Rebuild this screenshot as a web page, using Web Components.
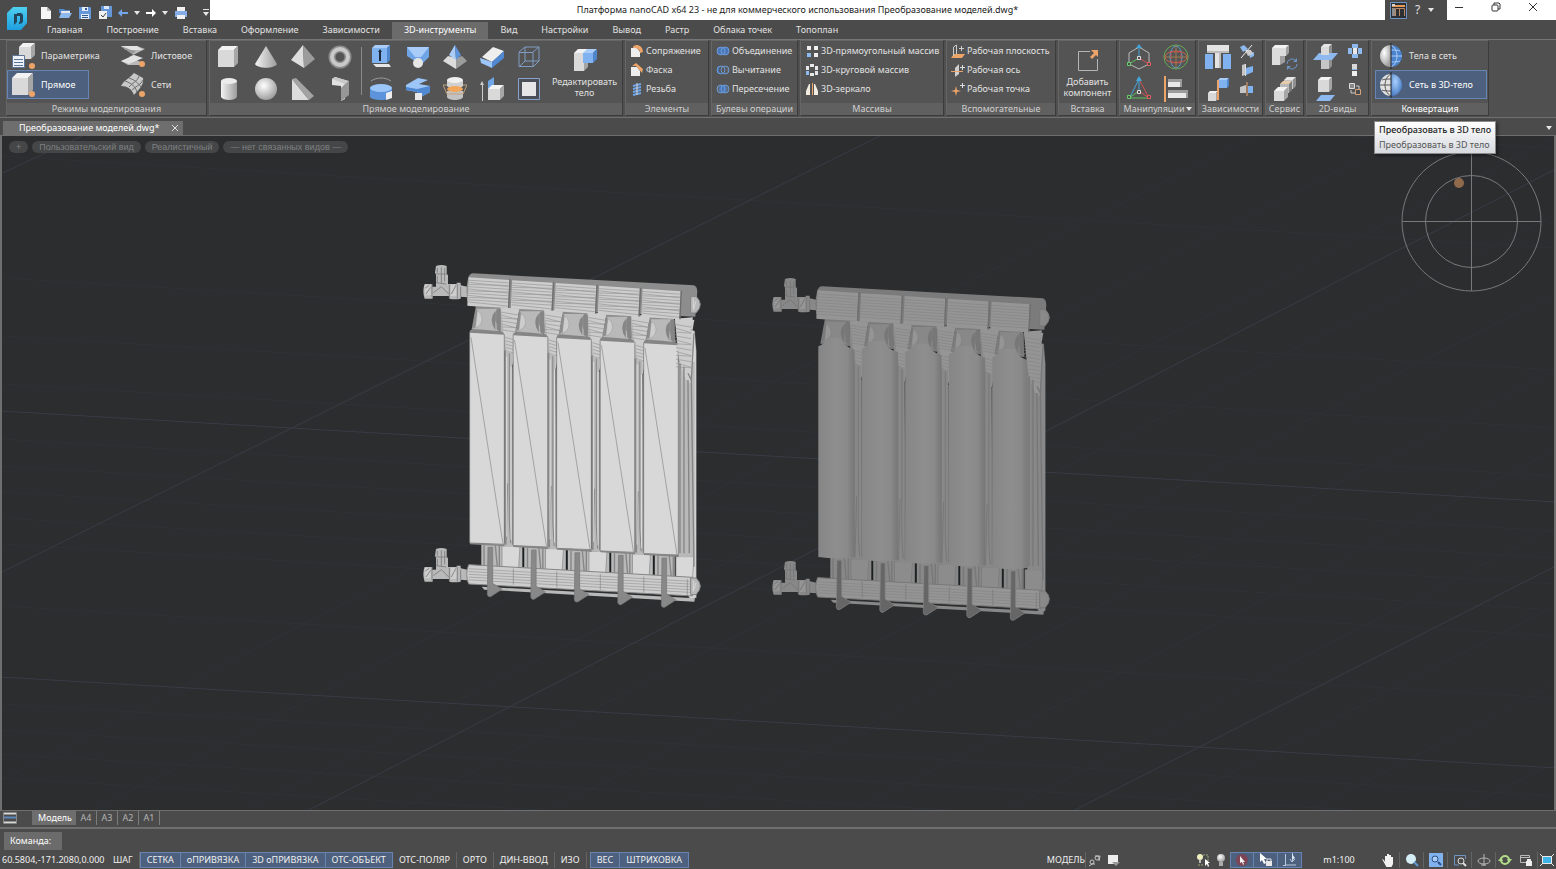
<!DOCTYPE html>
<html lang="ru">
<head>
<meta charset="utf-8">
<title>Платформа nanoCAD x64 23</title>
<style>
	html, body {
		margin: 0;
		height: 100%;
		background: #4b4b4b;
	}
	body {
		font-family: "Noto Sans", "Open Sans", sans-serif;
		font-size: 9px;
		line-height: 12px;
		color: #e2e2e2;
		--on: #4d607e;
		--on-line: #6685b2;
	}
</style>
</head>
<body>
<cad-app></cad-app>

<script>
///////////////////    icons    //////////////////////////

const GREY = ['#d9d9d9', '#f2f2f2', '#a6a6a6'];
const DULL = ['#c6c6c6', '#e6e6e6', '#8f8f8f'];
const BLUE = ['#7fb2ee', '#a9cdf8', '#4f86cc'];

// box seen from the front left: front, top and right faces
function box(x, y, w, h, d, tone = GREY) {
	return `<path fill="${tone[0]}" d="M${x} ${y + d}h${w}v${h}h${-w}z"/>
		<path fill="${tone[1]}" d="M${x} ${y + d}l${d} ${-d}h${w}l${-d} ${d}z"/>
		<path fill="${tone[2]}" d="M${x + w} ${y + d}l${d} ${-d}v${h}l${-d} ${d}z"/>`;
}

const dot = (x, y) => `<circle cx="${x}" cy="${y}" r="3" fill="#eda468"/>`;
const defs = `<defs>
	<linearGradient id="g"><stop stop-color="#f4f4f4"/><stop offset="1" stop-color="#9b9b9b"/></linearGradient>
	<radialGradient id="r" cx=".4" cy=".35" r=".65"><stop stop-color="#fff"/><stop offset="1" stop-color="#a0a0a0"/></radialGradient>
	<radialGradient id="b" cx=".4" cy=".35" r=".7"><stop stop-color="#a9d0ff"/><stop offset="1" stop-color="#4478c0"/></radialGradient>
	<linearGradient id="logo" x2="0" y2="1"><stop stop-color="#4fd0f0"/><stop offset="1" stop-color="#1d9fe0"/></linearGradient>
</defs>`;

const rings = (a, b, c) => `<circle cx="5" cy="7" r="4" fill="${a}"/><circle cx="9" cy="7" r="4" fill="${b}"/>
	<path fill="${c}" d="M7 3a4 4 0 0 1 0 8a4 4 0 0 1 0-8z"/>
	<g fill="none" stroke="#6c9bd8"><circle cx="5" cy="7" r="4"/><circle cx="9" cy="7" r="4"/></g>`;

// name: [width, height, markup]
const icons = {
	logo: [20, 24, `<path fill="url(#logo)" d="M6 0h14v16l-6 7H0V6z"/><path fill="#24465c" d="M7 7h3v8l-3 3zM10 6h3c2 0 3 1 3 3v5c0 2-2 3-4 3v-2c1 0 1-1 1-2V9h-3z"/>`],
	file: [12, 14, '<path fill="#f5f5f5" d="M1 1h6l4 4v8H1z"/><path fill="#b8b8b8" d="M7 1v4h4z"/>'],
	open: [14, 14, '<path fill="#4f86cc" d="M1 3h5l1 1h5v3H1z"/><path fill="#e8e8e8" d="M3 5h9v4H3z"/><path fill="#8db9ef" d="M3 7h11l-3 5H1z"/>'],
	save: [14, 14, '<path fill="#6597d8" d="M1 1h11l1 1v11H1z"/><path fill="#e3ecf8" d="M4 1h6v4H4zM3 8h8v5H3z"/><path fill="#35598c" d="M7 2h2v2H7zM4 9h6v1H4zM4 11h6v1H4z"/>'],
	saveall: [14, 14, '<path fill="#6597d8" d="M3 0h11v11H3z"/><path fill="#dce8f8" d="M6 0h5v3H6z"/><path fill="#f1f1f1" d="M1 5h8v8H1z"/><path fill="none" stroke="#444" d="M3 9l2 2 3-4"/>'],
	undo: [10, 10, '<path fill="#73a6e8" d="M0 5l4-4v3h6v2H4v3z"/>'],
	redo: [10, 10, '<path fill="#fff" d="M10 5L6 1v3H0v2h6v3z"/>'],
	print: [14, 14, '<path fill="#f1f1f1" d="M3 1h8v5H3z"/><path fill="#85aee6" d="M1 5h12v6H1z"/><path fill="#f1f1f1" d="M3 9h8v4H3z"/>'],
	caret: [6, 4, '<path fill="#e6e6e6" d="M0 0h6L3 4z"/>'],
	carets: [6, 7, '<path fill="#e6e6e6" d="M0 0h6v1H0zM0 3h6L3 7z"/>'],
	help: [17, 17, '<path fill="#2d3033" stroke="#6f93c2" d="M.5.5h16v16H.5z"/><path fill="#e79a5a" d="M2 3h13v2H2z"/><path fill="#8d8d8d" d="M2 6h3v8H2z"/><path fill="none" stroke="#b98763" d="M5.500 14V6.500h9V14M9.500 6v8"/><path fill="#d5d5d5" d="M2 2h3v2H2z"/>'],
	min: [10, 10, '<path stroke="#333" d="M1 5.500h8"/>'],
	restore: [10, 10, '<g fill="none" stroke="#333"><rect x="1" y="3" width="6" height="6" rx="1"/><path d="M3 3V1h5l1 1v5H7"/></g>'],
	close: [10, 10, '<path stroke="#333" d="M1 1l8 8M9 1L1 9"/>'],
	x: [8, 8, '<path stroke="#ddd" d="M1 1l6 6M7 1L1 7"/>'],

	param: [24, 26, box(8, 0, 12, 12, 4) + '<path fill="#eef2f8" stroke="#5c7698" d="M1.500 12.500h12v12h-12z"/><path stroke="#5c7698" d="M3 16.500h9M3 19.500h9M3 22.500h9"/>' + dot(21, 23)],
	direct: [24, 26, box(1, 1, 16, 17, 5) + dot(21, 22)],
	sheet: [24, 26, '<path fill="#b9b9b9" d="M0 3h16l8 3-16 8 12 5v3H7l-7-4 14-5z"/><path fill="#e2e2e2" d="M0 3h16l6 4H5zM0 18l13-6 9 3-14 6z"/><path fill="#969696" d="M0 3l5 4 6 4 4-3-5-1z"/>' + dot(21, 21)],
	mesh: [24, 26, '<path fill="#c8c8c8" d="M0 14C4 7 8 7 13 1l9 5c1 7-3 10-9 17-2-6-7-9-13-9z"/><path fill="none" stroke="#6d6d6d" d="M4 9c6 2 10 5 12 11M8 6c6 2 9 5 12 9M8 15c3-4 8-5 10-11M11 18c4-4 9-5 11-10"/>' + dot(21, 22)],

	cube: [24, 24, box(1, 1, 16, 17, 4)],
	cone: [24, 24, '<path fill="url(#g)" d="M12 1l11 18c-3 5-19 5-22 0z"/>'],
	pyramid: [24, 24, '<path fill="#dedede" d="M12 0L0 15l13 8z"/><path fill="#9c9c9c" d="M12 0l12 14-11 9z"/>'],
	torus: [24, 24, '<circle cx="12" cy="12" r="8" fill="none" stroke="#8b8b8b" stroke-width="7"/><circle cx="12" cy="12" r="8" fill="none" stroke="#c9c9c9" stroke-width="4"/>'],
	cylinder: [24, 24, '<path fill="url(#g)" d="M4 4h16v16c-2 4-14 4-16 0z"/><ellipse cx="12" cy="4" rx="8" ry="3" fill="#ececec"/>'],
	sphere: [24, 24, '<circle cx="12" cy="12" r="11" fill="url(#r)"/>'],
	wedge: [24, 24, '<path fill="#dcdcdc" d="M1 2v21h17z"/><path fill="#a3a3a3" d="M1 2l4-1 18 18-5 4z"/>'],
	polysolid: [24, 24, '<path fill="#e2e2e2" d="M4 2l3-2 13 4-3 3v15l-4 2V9L4 8z"/><path fill="#979797" d="M17 7l4-3v14l-8 6V11z"/><path fill="#c9c9c9" d="M4 2l3-2 14 4-4 3z"/>'],

	extrude: [24, 24, box(3, 0, 15, 15, 3, BLUE) + '<path fill="#e6e6e6" d="M4 19h16l2 3H7z"/><path fill="#1d2b3c" d="M9 7l2-3 2 3h-1v9h-2V7z"/>'],
	loft: [24, 24, '<path fill="#6fa5e6" d="M1 2h22v10l-8 8-14-9z"/><path fill="#a9cdf8" d="M1 2h22l-8 10H9z"/><circle cx="12" cy="18" r="5" fill="#e6e6e6"/>'],
	tip: [24, 24, '<path fill="#dcdcdc" d="M5 11L0 16l13 8V13z"/><path fill="#9c9c9c" d="M19 11l5 5-11 8V13z"/><path fill="#a9cdf8" d="M12 0L6 10l7 5z"/><path fill="#5c93da" d="M12 0l6 10-5 5z"/>'],
	eraser: [24, 24, '<path fill="#eee" d="M2 12L13 2l11 4-12 11z"/><path fill="#9cc6f8" d="M0 13l12 4v6L1 18z"/><path fill="#5088d2" d="M12 17L24 6v7L12 23z"/>'],
	wire: [24, 24, '<g fill="none" stroke="#7f9cc2"><path d="M2 7.500h14v14H2zM8 2h14v14H8zM2 7l6-5M16 7l6-5M2 22l6-6M16 22l6-6"/></g>'],
	revolve: [24, 24, '<path fill="#5c93da" d="M1 10h22v10c-2 4-20 4-22 0z"/><ellipse cx="12" cy="11" rx="11" ry="4" fill="#9cc6f8"/><path fill="#eee" d="M17 16l6-2v7l-6 2z"/><path fill="none" stroke="#9a9a9a" d="M2 4c6-4 14-4 20 0"/>'],
	sweep: [24, 24, '<path fill="#9cc6f8" d="M0 8L12 1l10 2-9 4 11 2v6l-9 5-4-5-11-2z"/><path fill="#5088d2" d="M0 10l11 2 13-3v6l-9 5-4-5-11-2z"/><path fill="#e9e9e9" d="M9 16h7v7H9z"/>'],
	press: [24, 24, '<path fill="#c2c2c2" d="M4 14h16v6c-1 4-15 4-16 0z"/><path fill="none" stroke="#bfa37f" d="M0 8h24l-4 9H4z"/><path fill="#d0d0d0" d="M4 3h16v6c-2 3-14 3-16 0z"/><ellipse cx="12" cy="12" rx="8" ry="3" fill="#f2a75c"/><ellipse cx="12" cy="3" rx="8" ry="3" fill="#efefef"/>'],
	pull: [24, 24, '<path fill="#6fa5e6" d="M8 4l6-4v10l-6 5z"/>' + box(8, 8, 12, 11, 4) + '<path fill="#ccc" d="M2 4l2 4H3v16H2V8H0z"/>'],
	region: [24, 24, '<path fill="#4a4f58" stroke="#88a3cc" d="M1.500 1.500h21v21h-21z"/><path fill="#e6e6e6" d="M5 5h14v14H5z"/>'],
	edit: [26, 26, box(2, 2, 10, 18, 4) + box(11, 2, 10, 10, 4, BLUE)],

	fillet: [14, 14, '<path fill="#ededed" d="M1 4h6l3 4v5H1z"/><path fill="#eda468" d="M3 3c2-4 10-2 10 5l-3 1c0-4-3-5-7-5z"/>'],
	chamfer: [14, 14, '<path fill="#ededed" d="M1 4h6l3 4v5H1z"/><path fill="#eda468" d="M2 3l4-3 7 6-1 4-6-7z"/>'],
	thread: [14, 14, '<path stroke="#6fa5e6" stroke-width="2" d="M3 4l8-2M3 7l8-2M3 10l8-2M3 13l8-2"/><path stroke="#d5d5d5" d="M7 1v12"/>'],
	union: [14, 14, rings('#4b76b8', '#4b76b8', '#4b76b8')],
	subtract: [14, 14, rings('#4b76b8', '#666', '#555')],
	intersect: [14, 14, rings('#666', '#666', '#4b76b8')],
	array: [14, 14, '<path fill="#f0f0f0" d="M2 2h4v4H2zM9 2h4v4H9zM9 9h4v4H9z"/><path fill="#8db9ef" d="M2 9h4v4H2z"/>'],
	polar: [14, 14, '<path fill="#e8e8e8" d="M5 1h4v3H5zM5 10h4v3H5zM1 3h3v4H1zM10 3h3v4h-3zM10 8h3v4h-3z"/><path fill="#8db9ef" d="M1 8h3v4H1z"/>'],
	mirror: [14, 14, '<path fill="#f2ece0" d="M1 13V9l3-7h1v11zM13 13V9l-3-7H9v11z"/><path fill="#eda468" d="M7 1h1v12H7z"/>'],
	plane: [14, 14, '<path fill="#eda468" d="M3 10h11l-3 4H0z"/><path fill="none" stroke="#ccc" d="M2.500 12V3l3-2v9M8 4.500h5M10.500 2v5"/>'],
	axis: [14, 14, '<path fill="#cfcfcf" d="M4 5l4-4v10l-4 3z"/><path stroke="#eda468" d="M0 8.500h12"/><path stroke="#ddd" d="M9 4.500h5M11.500 2v5"/>'],
	point: [14, 14, '<path fill="#eda468" d="M5 4l1 4 4 1-4 1-1 4-1-4-4-1 4-1z"/><path stroke="#ddd" d="M9 3.500h5M11.500 1v5"/>'],
	insert: [26, 26, '<path fill="none" stroke="#b5b5b5" d="M15 4.500H3.500v19h19V12"/><path fill="#eda468" d="M16 3h7v7l-2-2-4 4-2-2 4-4z"/>'],

	ucs: [26, 26, '<path fill="none" stroke="#bbb" d="M13 3l10 6v11l-10 5-10-5V9z"/><path stroke="#45a5d8" d="M13 2v12"/><path stroke="#5cbf5c" d="M13 14L3 20"/><path stroke="#d35353" d="M13 14l10 6"/><path fill="#4b4b4b" stroke="#6ad16a" d="M1.500 18.500h3v3h-3z"/><path fill="#4b4b4b" stroke="#e26060" d="M21.500 18.500h3v3h-3z"/><path fill="#4b4b4b" stroke="#ddd" d="M11.500 12.500h3v3h-3z"/><path fill="#45a5d8" d="M10 4l3-4 3 4z"/>'],
	orbit: [26, 26, '<g fill="none"><circle cx="13" cy="13" r="12" stroke="#64ad58"/><ellipse cx="13" cy="13" rx="6" ry="11" stroke="#54a0c8"/><ellipse cx="13" cy="13" rx="11" ry="6" stroke="#c96050"/><path stroke="#d35353" stroke-dasharray="2 1" d="M8 8h10v10H8z"/><path stroke="#a07a4c" d="M13 1v24M1 13h24"/></g>'],
	gizmo: [26, 26, '<g fill="none"><path stroke="#45a5d8" d="M13 3L4 21M13 3v12"/><path stroke="#5cbf5c" d="M3 22h19M3 22l10-7"/><path stroke="#d35353" d="M13 3l10 19-10-7"/></g><path fill="#45a5d8" d="M10 5l3-5 3 5z"/><path fill="#4b4b4b" stroke="#6ad16a" d="M1.500 19.500h3v3h-3z"/><path fill="#4b4b4b" stroke="#e26060" d="M21.500 19.500h3v3h-3z"/><path fill="#4b4b4b" stroke="#ddd" d="M11.500 14.500h3v3h-3z"/>'],
	align: [26, 26, '<path stroke="#eda468" stroke-width="2" d="M2 0v26"/><path fill="#9b9b9b" d="M5 3h14v8H5zM5 14h20v8H5z"/><path fill="#e8e8e8" d="M5 6h12v5H5zM5 17h18v5H5z"/>'],
	mateT: [28, 26, '<path fill="#e3e3e3" d="M3 1h22v7h-8v16h-6V8H3z"/><path fill="#bcbcbc" d="M3 7h22v2h-8v15h-2V9H3z"/><path fill="#7fb2ee" d="M1 10h8v15H1zM19 10h8v15h-8z"/>'],
	mateZ: [26, 26, box(3, 15, 8, 8, 2) + box(13, 2, 9, 8, 2, BLUE) + '<path stroke="#eda468" stroke-width="2" d="M13 4v20"/>'],
	mate1: [14, 14, '<path fill="#8db9ef" d="M0 3l4-2 4 4-5 3zM9 9l5-1v4l-4 2z"/><path fill="#ccc" d="M5 6h6l2 4-5 2z"/><path stroke="#eee" d="M1 14L12 1"/>'],
	mate2: [14, 14, '<path fill="#c6c6c6" d="M2 2l3-1v11l-3 1z"/><path fill="#7fb2ee" d="M6 5l7-2v6l-7 3z"/><path stroke="#ddd" d="M5.500 1v12"/>'],
	mate3: [14, 14, '<path fill="#c6c6c6" d="M0 5l6-2v8H0z"/><path fill="#7fb2ee" d="M8 4h5v7H8z"/><path stroke="#eda468" d="M7 0v14"/>'],
	service: [28, 26, '<path fill="#dcdcdc" d="M1 4h14v8H9v9H1z"/><path fill="#f2f2f2" d="M1 4l3-3h14l-3 3z"/><path fill="#a0a0a0" d="M15 4l3-3v8l-3 3zM9 12h5v6l-5 3z"/><path fill="none" stroke="#6f93c2" d="M16 20a5 5 0 0 1 9-3M26 20a5 5 0 0 1-9 3"/><path fill="#6f93c2" d="M26 14v4h-4zM16 26v-4h4z"/>'],
	service2: [26, 26, box(12, 1, 9, 9, 3, DULL) + box(8, 5, 9, 9, 3, ['#b9b9b9', '#e8cba8', '#7d7d7d']) + box(2, 11, 10, 10, 4)],
	section: [26, 26, box(8, 0, 8, 22, 3, DULL) + '<path fill="#8db9ef" d="M6 9h19l-6 7H0z"/><path fill="#dadada" d="M8 3h8v8H8z"/>'],
	flat: [26, 26, box(5, 1, 11, 12, 3) + '<path fill="#8db9ef" d="M8 19h14l-5 6H3z"/>'],
	v1: [14, 14, '<path fill="#8db9ef" d="M0 4h4v6H0zM10 4h4v6h-4zM4 0h6v4H4zM4 10h6v4H4z"/><path fill="#e8e8e8" d="M5 4h4v6H5z"/>'],
	v2: [14, 14, '<path fill="#d8d8d8" d="M4 1h5v5H4z"/><path fill="#f0f0f0" d="M4 8h5v5H4z"/><path fill="#8db9ef" d="M4 6h5v1H4z"/>'],
	v3: [14, 14, '<path fill="#8a8a8a" stroke="#ddd" d="M1.500 1.500h5v5h-5z"/><path fill="#4b4b4b" stroke="#d8a27a" d="M7.500 7.500h5v5h-5z"/><path fill="none" stroke="#ccc" d="M8 4h3v3M3 8v3h4"/>'],
	tomesh: [24, 26, '<path fill="url(#r)" d="M12 2a11 11 0 0 0 0 22z"/><path fill="#4a82cc" d="M12 2a11 11 0 0 1 0 22z"/><path fill="none" stroke="#a9cdf8" d="M12 7c4 0 7 0 9 1M12 13h11M12 19c4 0 7 0 9-1M12 2c8 4 8 18 0 22"/><path stroke="#222" d="M12 0v26"/>'],
	tosolid: [24, 26, '<path fill="#e2e2e2" d="M12 2a11 11 0 0 0 0 22z"/><path fill="none" stroke="#555" d="M12 7c-4 0-7 0-9 1M12 13H1M12 19c-4 0-7 0-9-1M12 2c-8 4-8 18 0 22"/><path fill="url(#b)" d="M12 2a11 11 0 0 1 0 22z"/><path stroke="#222" d="M12 0v26"/>'],

	sheets: [14, 12, '<path stroke="#d8d8d8" stroke-width="2" d="M1 1.500h12M1 10.500h12"/><path stroke="#5d86bd" stroke-width="2" d="M1 5.500h12"/><path fill="none" stroke="#888" d="M.5.5h13v11H.5z"/>'],
	link: [12, 14, '<g fill="none" stroke="#c5c5c5"><circle cx="3" cy="9" r="2"/><path d="M0 13l3-2h3M6 3h5l-1 5"/><circle cx="8" cy="5" r="2"/></g>'],
	note: [14, 14, '<path fill="#ededed" d="M2 2h10v9H2z"/><path fill="#9a9a9a" d="M6 9h8l-4 4z"/>'],
	pick: [14, 14, '<circle cx="4" cy="4" r="3" fill="#eef0c0"/><path fill="#bbb" d="M3 7h2v3H3z"/><path fill="none" stroke="#9aa87c" stroke-dasharray="2 1" d="M7 2h5v6M2 12h5"/><path fill="#fff" d="M9 6v7l2-2 1 3 1-1-1-3h2z"/>'],
	bulb: [10, 14, '<circle cx="5" cy="5" r="4" fill="url(#r)"/><path fill="#aaa" d="M3 9h4v4H3z"/>'],
	sel: [14, 14, '<circle cx="7" cy="7" r="6" fill="#7d4456"/><path fill="#f0f0f0" d="M5 3v7l2-1 1 3 1-1-1-2h2z"/>'],
	lock: [14, 14, '<path fill="#fff" d="M1 0v9l2-2 2 4 2-1-2-4h3z"/><path fill="#e8e8e8" d="M7 8h6v5H7z"/><path fill="none" stroke="#e8e8e8" d="M8 8V6h4v2"/>'],
	coords: [14, 14, '<path fill="none" stroke="#b9c8de" d="M2.500 1v11H13M9.500 0v9M7 6l2 3 3-3M0 12.500h3"/><path fill="#dfe8f4" d="M9 1l3 4-3 2z"/>'],
	hand: [14, 14, '<path fill="#f2f2f2" d="M1 6l2 1 1 2V3h2v4-6h2v6-5h2v5-3h2v7l-2 4H6z"/>'],
	lens: [14, 14, '<circle cx="6" cy="6" r="5" fill="#d5eef6"/><path stroke="#5f97d6" stroke-width="2" d="M9 9l4 4"/>'],
	lenswin: [14, 14, '<path fill="#7fb2ee" d="M0 0h14v14H0z"/><circle cx="6" cy="6" r="3" fill="#a9cdf8" stroke="#2d4f80"/><path stroke="#2d4f80" stroke-width="2" d="M9 9l3 3"/>'],
	lensbox: [14, 14, '<path fill="none" stroke="#6f93c2" d="M6 12H1.500V2.500h11V6"/><circle cx="8" cy="8" r="3" fill="none" stroke="#ddd"/><path stroke="#ddd" stroke-width="2" d="M10 10l3 3"/>'],
	spin: [14, 14, '<g fill="none" stroke="#b5b5b5"><ellipse cx="7" cy="8" rx="6" ry="3"/><path d="M7 1v12M4 12h5"/></g>'],
	regen: [14, 14, '<circle cx="7" cy="7" r="4" fill="none" stroke="#b3dc8a" stroke-width="2"/><path fill="#b3dc8a" d="M0 8h5L3 4zM14 6H9l2 4z"/>'],
	winlock: [14, 14, '<path fill="none" stroke="#bbb" d="M9 9.500H1.500v-7h9V5M1 4.500h9"/><path fill="#eee" d="M7 8h6v5H7zM8 6h4v2H8z"/>'],
	full: [14, 14, '<path fill="#3fb4e8" d="M3 4h8v6H3z"/><path fill="none" stroke="#e8e8e8" d="M2.500 3.500h9v7h-9zM0 1l3 3M14 1l-3 3M0 13l3-3M14 13l-3-3"/>'],
};

class CadIcon extends HTMLElement {
	constructor() {
		super();
		this.attachShadow({ mode: 'open' });
	}

	render() {
		const [w, h, art] = icons[this.getAttribute('name')];
		this.shadowRoot.innerHTML = `<style>:host { display: block; flex: none } svg { display: block }</style>
			<svg width="${w}" height="${h}" viewBox="0 0 ${w} ${h}" aria-hidden="true">${defs}${art}</svg>`;
	}

	static get observedAttributes() {
		return ['name'];
	}

	attributeChangedCallback() {
		this.render();
	}
}

customElements.define('cad-icon', CadIcon);

// every other element only clones its template
function define(name, html, setup) {
	const template = document.createElement('template');
	template.innerHTML = html;
	customElements.define(name, class extends HTMLElement {
		connectedCallback() {
			if (this.shadowRoot) return;
			this.attachShadow({ mode: 'open' });
			this.shadowRoot.appendChild(template.content.cloneNode(true));
			if (setup) setup(this, this.shadowRoot);
		}
	});
}

const reset = `button {
	display: flex; align-items: center; margin: 0; padding: 0; border: 0;
	background: none; color: inherit; font: inherit; text-align: left; white-space: nowrap;
}`;

///////////////////    ribbon    //////////////////////////

define('ribbon-button', `
	<style>
		:host { display: block }
		${reset}
		button { width: 100%; justify-content: center; height: 32px }
		:host([kind=wide]) button {
			justify-content: flex-start; gap: 6px; height: 29px; padding: 0 0 0 3px; border: 1px solid transparent; box-sizing: border-box;
		}
		:host([on]) button { background: var(--on); border-color: var(--on-line) !important; color: #fff }
		:host([kind=row]) button { justify-content: flex-start; gap: 2px; height: 19px }
		:host([kind=big]) button { flex-direction: column; height: auto; padding-top: 6px; gap: 3px; text-align: center; line-height: 11px }
	</style>
	<button type="button"><cad-icon></cad-icon><span><slot></slot></span></button>
`, (host, root) => {
	root.querySelector('cad-icon').setAttribute('name', host.getAttribute('icon'));
	const button = root.querySelector('button');
	if (host.title) {
		button.setAttribute('aria-label', host.title);
		root.querySelector('span').remove();
	}
	if (host.hasAttribute('on')) button.setAttribute('aria-pressed', 'true');
});

define('ribbon-group', `
	<style>
		:host {
			display: flex; flex-direction: column; flex: none; position: relative; box-sizing: border-box; height: 76px;
			border: 1px solid #666; border-right-color: #3c3c3c; border-bottom-color: #3c3c3c; background: #545454;
		}
		.body { display: flex; flex: 1; min-height: 0 }
		.caption { display: flex; align-items: center; justify-content: center; gap: 1px; height: 12px; background: #606060; color: #cfcfcf }
		:host([lit]) .caption { color: #fff }
	</style>
	<div class="body"><slot></slot></div>
	<div class="caption"><span></span></div>
	<slot name="tip"></slot>
`, (host, root) => {
	root.querySelector('span').textContent = host.getAttribute('caption');
	if (host.hasAttribute('more')) root.querySelector('.caption').insertAdjacentHTML('beforeend', '<cad-icon name="caret"></cad-icon>');
});

define('tool-tip', `
	<style>
		:host {
			display: block; position: absolute; z-index: 2; top: 80px; left: 2px; padding: 0 4px 1px; line-height: 15px; white-space: nowrap;
			border: 1px solid #8a8a8a; box-sizing: border-box; background: linear-gradient(#fff, #d6d9de); color: #555;
			box-shadow: 2px 2px 3px rgba(0, 0, 0, .4);
		}
		strong { display: block; font-weight: 500; color: #222 }
	</style>
	<strong><slot name="head"></slot></strong><slot></slot>
`);

define('cad-ribbon', `
	<style>
		:host { display: flex; gap: 2px; padding: 0 6px 1px; border-top: 1px solid #767676; border-bottom: 1px solid #707070; background: #505050 }
		.col { flex: none }
		.rows { padding: 0 1px 0 4px }
		.grid { display: grid; grid-template-columns: repeat(var(--n), 37px); align-content: start }
		hr { margin: 6px 0 8px 3px; border: 0; border-left: 1px solid #8a8a8a }
		.modes { width: 199px; display: grid; grid-template-columns: 82px 82px; gap: 28px; align-items: start }
		.big { width: 75px }
		.small { display: grid; grid-auto-rows: 19px; width: 20px; padding-left: 4px }
		.convert { flex: 1; padding: 0 1px 0 3px }
	</style>
	<ribbon-group caption="Режимы моделирования">
		<div class="modes">
			<div class="col">
				<ribbon-button kind="wide" icon="param">Параметрика</ribbon-button>
				<ribbon-button kind="wide" icon="direct" on>Прямое</ribbon-button>
			</div>
			<div class="col">
				<ribbon-button kind="wide" icon="sheet">Листовое</ribbon-button>
				<ribbon-button kind="wide" icon="mesh">Сети</ribbon-button>
			</div>
		</div>
	</ribbon-group>
	<ribbon-group caption="Прямое моделирование">
		<div class="col grid" style="--n: 4">
			<ribbon-button icon="cube" title="Параллелепипед"></ribbon-button>
			<ribbon-button icon="cone" title="Конус"></ribbon-button>
			<ribbon-button icon="pyramid" title="Пирамида"></ribbon-button>
			<ribbon-button icon="torus" title="Тор"></ribbon-button>
			<ribbon-button icon="cylinder" title="Цилиндр"></ribbon-button>
			<ribbon-button icon="sphere" title="Шар"></ribbon-button>
			<ribbon-button icon="wedge" title="Клин"></ribbon-button>
			<ribbon-button icon="polysolid" title="Политело"></ribbon-button>
		</div>
		<hr>
		<div class="col grid" style="--n: 5">
			<ribbon-button icon="extrude" title="Выдавливание"></ribbon-button>
			<ribbon-button icon="loft" title="По сечениям"></ribbon-button>
			<ribbon-button icon="tip" title="Отсечение"></ribbon-button>
			<ribbon-button icon="eraser" title="Придание толщины"></ribbon-button>
			<ribbon-button icon="wire" title="Каркас"></ribbon-button>
			<ribbon-button icon="revolve" title="Вращение"></ribbon-button>
			<ribbon-button icon="sweep" title="По траектории"></ribbon-button>
			<ribbon-button icon="press" title="Разрез"></ribbon-button>
			<ribbon-button icon="pull" title="Вытягивание"></ribbon-button>
			<ribbon-button icon="region" title="Область"></ribbon-button>
		</div>
		<ribbon-button class="big" kind="big" icon="edit">Редактировать<br>тело</ribbon-button>
	</ribbon-group>
	<ribbon-group caption="Элементы" style="min-width: 84px">
		<div class="rows">
			<ribbon-button kind="row" icon="fillet">Сопряжение</ribbon-button>
			<ribbon-button kind="row" icon="chamfer">Фаска</ribbon-button>
			<ribbon-button kind="row" icon="thread">Резьба</ribbon-button>
		</div>
	</ribbon-group>
	<ribbon-group caption="Булевы операции" style="min-width: 87px">
		<div class="rows">
			<ribbon-button kind="row" icon="union">Объединение</ribbon-button>
			<ribbon-button kind="row" icon="subtract">Вычитание</ribbon-button>
			<ribbon-button kind="row" icon="intersect">Пересечение</ribbon-button>
		</div>
	</ribbon-group>
	<ribbon-group caption="Массивы" style="min-width: 144px">
		<div class="rows">
			<ribbon-button kind="row" icon="array">3D-прямоугольный массив</ribbon-button>
			<ribbon-button kind="row" icon="polar">3D-круговой массив</ribbon-button>
			<ribbon-button kind="row" icon="mirror">3D-зеркало</ribbon-button>
		</div>
	</ribbon-group>
	<ribbon-group caption="Вспомогательные" style="min-width: 110px">
		<div class="rows">
			<ribbon-button kind="row" icon="plane">Рабочая плоскость</ribbon-button>
			<ribbon-button kind="row" icon="axis">Рабочая ось</ribbon-button>
			<ribbon-button kind="row" icon="point">Рабочая точка</ribbon-button>
		</div>
	</ribbon-group>
	<ribbon-group caption="Вставка" style="min-width: 59px">
		<ribbon-button kind="big" icon="insert" style="flex: 1">Добавить<br>компонент</ribbon-button>
	</ribbon-group>
	<ribbon-group caption="Манипуляции" more style="min-width: 77px">
		<div class="col grid" style="--n: 2">
			<ribbon-button icon="ucs" title="ПСК"></ribbon-button>
			<ribbon-button icon="orbit" title="Поворот"></ribbon-button>
			<ribbon-button icon="gizmo" title="Перемещение"></ribbon-button>
			<ribbon-button icon="align" title="Выравнивание"></ribbon-button>
		</div>
	</ribbon-group>
	<ribbon-group caption="Зависимости" style="min-width: 65px">
		<div class="col grid" style="--n: 1">
			<ribbon-button icon="mateT" title="Вставка"></ribbon-button>
			<ribbon-button icon="mateZ" title="Совмещение"></ribbon-button>
		</div>
		<div class="small">
			<ribbon-button kind="row" icon="mate1" title="Угол"></ribbon-button>
			<ribbon-button kind="row" icon="mate2" title="Касание"></ribbon-button>
			<ribbon-button kind="row" icon="mate3" title="Симметрия"></ribbon-button>
		</div>
	</ribbon-group>
	<ribbon-group caption="Сервис" style="min-width: 39px">
		<div class="col grid" style="--n: 1">
			<ribbon-button icon="service" title="Обновить"></ribbon-button>
			<ribbon-button icon="service2" title="Проверка пересечений"></ribbon-button>
		</div>
	</ribbon-group>
	<ribbon-group caption="2D-виды" style="min-width: 61px">
		<div class="col grid" style="--n: 1">
			<ribbon-button icon="section" title="Сечение"></ribbon-button>
			<ribbon-button icon="flat" title="Проекция"></ribbon-button>
		</div>
		<div class="small">
			<ribbon-button kind="row" icon="v1" title="Виды"></ribbon-button>
			<ribbon-button kind="row" icon="v2" title="Разрез"></ribbon-button>
			<ribbon-button kind="row" icon="v3" title="Выносной вид"></ribbon-button>
		</div>
	</ribbon-group>
	<ribbon-group caption="Конвертация" lit style="min-width: 118px">
		<div class="convert">
			<ribbon-button kind="wide" icon="tomesh">Тела в сеть</ribbon-button>
			<ribbon-button kind="wide" icon="tosolid" on>Сеть в 3D-тело</ribbon-button>
		</div>
		<tool-tip slot="tip"><span slot="head">Преобразовать в 3D тело</span>Преобразовать в 3D тело</tool-tip>
	</ribbon-group>
`);

///////////////////    header    //////////////////////////

define('cad-header', `
	<style>
		:host { display: grid; grid-template-columns: 35px 1fr; background: #4b4b4b }
		${reset}
		.logo { padding: 7px 0 0 7px }
		.title { display: flex; height: 20px }
		.quick { display: flex; align-items: center; box-sizing: border-box; width: 175px; gap: 6px; padding: 5px 1px 0 5px }
		.quick button:last-child { margin-left: auto }
		h1 { display: flex; flex: 1; align-items: center; justify-content: center; margin: 0; font: inherit; background: #fff; color: #1a1a1a }
		.tools { display: flex; align-items: center; box-sizing: border-box; width: 62px; gap: 8px; padding-left: 5px; font-size: 12px }
		.win { display: flex; align-items: flex-start; padding: 2px 18px 0 7px; gap: 27px; background: #fff }
		nav { display: flex; height: 19px; align-items: flex-end }
		nav a { padding: 2px 12px 3px; line-height: 12px; color: inherit; text-decoration: none }
		nav a.on { background: #6b6b6b; color: #fff }
	</style>
	<div class="logo"><cad-icon name="logo"></cad-icon></div>
	<div>
		<div class="title">
			<div class="quick">
				<button aria-label="Новый"><cad-icon name="file"></cad-icon></button>
				<button aria-label="Открыть"><cad-icon name="open"></cad-icon></button>
				<button aria-label="Сохранить"><cad-icon name="save"></cad-icon></button>
				<button aria-label="Сохранить все"><cad-icon name="saveall"></cad-icon></button>
				<button aria-label="Отменить"><cad-icon name="undo"></cad-icon></button>
				<button aria-label="Список отмены"><cad-icon name="caret"></cad-icon></button>
				<button aria-label="Повторить"><cad-icon name="redo"></cad-icon></button>
				<button aria-label="Список повтора"><cad-icon name="caret"></cad-icon></button>
				<button aria-label="Печать"><cad-icon name="print"></cad-icon></button>
				<button aria-label="Настроить панель"><cad-icon name="carets"></cad-icon></button>
			</div>
			<h1>Платформа nanoCAD x64 23 - не для коммерческого использования Преобразование моделей.dwg*</h1>
			<div class="tools">
				<button aria-label="Интерфейс"><cad-icon name="help"></cad-icon></button>
				<button>?</button>
				<button aria-label="Меню справки"><cad-icon name="caret"></cad-icon></button>
			</div>
			<div class="win">
				<button aria-label="Свернуть"><cad-icon name="min"></cad-icon></button>
				<button aria-label="Восстановить"><cad-icon name="restore"></cad-icon></button>
				<button aria-label="Закрыть"><cad-icon name="close"></cad-icon></button>
			</div>
		</div>
		<nav>
			<a href="#">Главная</a><a href="#">Построение</a><a href="#">Вставка</a><a href="#">Оформление</a><a href="#">Зависимости</a><a href="#" class="on">3D-инструменты</a><a href="#">Вид</a><a href="#">Настройки</a><a href="#">Вывод</a><a href="#">Растр</a><a href="#">Облака точек</a><a href="#">Топоплан</a>
		</nav>
	</div>
`);

define('doc-tabs', `
	<style>
		:host { display: flex; align-items: flex-end; justify-content: space-between; height: 17px; padding: 0 4px 0 3px; border-bottom: 1px solid #6f6f6f; background: #4b4b4b }
		${reset}
		.tab { display: flex; align-items: center; gap: 12px; height: 14px; padding: 0 4px 0 16px; background: #6e6e6e; color: #fff }
		.more { height: 14px }
	</style>
	<div class="tab"><span>Преобразование моделей.dwg*</span><button aria-label="Закрыть вкладку"><cad-icon name="x"></cad-icon></button></div>
	<button class="more" aria-label="Список документов"><cad-icon name="caret"></cad-icon></button>
`);

///////////////////    model    //////////////////////////

const LIGHT = { panel: '#d8d8d8', tube: '#cdcdcd', streak: '#959595', dark: '#858585', edge: '#6e6e6e', mid: '#b9b9b9', cap: '#8d8d8d' };
const SHADED = { panel: '#8c8c8c', tube: '#959595', streak: '#858585', dark: '#777', edge: '#6e6e6e', mid: '#888', cap: '#7b7b7b' };

function streaks(x, y, w, h, n, c, lean) {
	let d = '';
	for (let i = 1; i < n; i++) {
		const sy = y + h * i / n;
		d += `M${x} ${sy}L${x + w} ${sy + 8 + (lean ? (i % 3 - 1) * 5 : 0)}`;
	}
	return `<path d="${d}" stroke="${c}" stroke-width="2" fill="none"/>`;
}

function valve(y, p) {
	return `<g transform="translate(0 ${y})">
		<path fill="${p.mid}" d="M108 0q16-6 32 0v24l4 4v26h26v-4h12v8l20 4v32l-20-2v6q-20 4-34 0v-8H98v8H74q-8-24 0-44h22v8h12V26l-3-6z"/>
		<path fill="${p.tube}" d="M74 56h18v32H74zM152 56h18v34h-18z"/>
		<path fill="none" stroke="${p.dark}" stroke-width="3" d="M96 54v40M108 24h34M148 56v40M172 54v44M182 62v30M100 80l24-18 22 22M112 6v14M124 4v50M134 6v40M112 30v20M108 50l30 4M76 66l12-8M78 84l14-20M154 84l14-26"/>
	</g>`;
}

function radiator(p) {
	const flat = p === LIGHT;
	let s = valve(48, p) + valve(897, p);
	// rear plate on the right, lower manifold
	s += `<path fill="${p.panel}" stroke="${p.edge}" d="M850 235l34 8 5 60v740l-18 5-36-60z"/>
		<path fill="${p.mid}" d="M245 1010l640 35-2 10-630-36z"/>`;
	for (let i = 0; i < 5; i++) {
		const slit = i < 4;
		s += `<g transform="translate(${130.5 * i} ${8 * i})">
			<path fill="${p.mid}" d="M244 880h${slit ? 134 : 58}v75h-${slit ? 134 : 58}z"/>
			<path fill="${p.panel}" stroke="${p.dark}" stroke-width="2" d="M306 888h54l-4 66h-50z"/>
			<path stroke="${p.dark}" stroke-width="4" d="M252 886v66M286 886l6 66M298 886v66"/>
			${slit ? '<path stroke="#1d2022" stroke-width="6" d="M370 890v62"/>' : ''}
			<path fill="${p.cap}" d="M228 166l72 4 4 80-90-8z"/>
			${slit ? `<path fill="${p.mid}" d="M300 172h66v70l-20 60h-40z"/>` : ''}
			<path fill="${p.tube}" d="M303 172l58 6-12 70-4 60-8 40h-10l-12-60z"/>
			${streaks(304, 178, 50, 70, 8, p.streak, flat)}${streaks(316, 252, 28, 60, 6, p.streak, false)}
			<path fill="${p.mid}" d="M230 176h62q-22 30 14 68l-90-8q32-10 14-60z"/>
			<path fill="${p.tube}" stroke="${p.dark}" d="M232 182q14 8 14 26t-20 26z"/>
			<path fill="${p.dark}" d="M286 182q-22 26 0 58zM290 178h12v70l-12-10z"/>
			${slit ? '<path stroke="#202325" stroke-width="5" d="M359 188l-7 46"/>' : ''}
			<path fill="${p.mid}" d="M314 250l6 50 16 10 4 580-26-2z"/>
			<path fill="none" stroke="${p.dark}" stroke-width="3" d="M316 300v584M328 310v500l4 70M323 700l-5 184M338 350v534"/>
			${flat ? `<path fill="none" stroke="#eee" stroke-width="2" d="M320 320v540M333 350v520"/>` : ''}
			${flat
				? `<path fill="${p.panel}" stroke="${p.edge}" stroke-width="2" d="M209 246l6-5 92 6 6 6v630l-104-4z"/><path fill="${p.dark}" d="M210 240l98 6 4 8-102-6zM210 878l104 6v5l-104-6z"/><path stroke="#888" stroke-width="2" d="M213 262l96 620"/>`
				: `<path fill="url(#plate)" d="M208 250q20-6 24-24h44q6 24 40 34v622q-50 8-108 0z"/>`}
		</g>`;
	}
	// columns at the right end
	s += `<path fill="${p.mid}" d="M836 335h48v585h-48z"/>
		<path fill="${p.tube}" d="M825 206l54-4-8 45 12 5-10 150-16-14-20-60z"/>${streaks(828, 212, 46, 150, 13, p.streak, flat)}
		<path fill="none" stroke="${p.dark}" stroke-width="4" d="M840 340v570M852 350v560M864 390l4 520M882 250l-8 140-10-20M874 390l8 560"/>`;
	// lower tube with fins
	s += `<path fill="${p.tube}" stroke="${p.dark}" stroke-width="3" d="M206 944l672 38v56l-672-36q-12-28 0-58z"/>
		${streaks(206, 948, 672, 50, 6, p.streak, false).replace(/L878 ([\d.]+)/g, (m, y) => 'L878 ' + (+y + 30))}`;
	for (let i = 0; i < 5; i++) {
		s += `<g transform="translate(${130.5 * i} ${8 * i})">
			<path stroke="${p.dark}" stroke-width="2" d="M276 952v50M340 956v48"/>
			<path fill="${flat ? '#888' : '#666'}" stroke="${flat ? '#777' : '#858585'}" stroke-width="2" d="M264 892h14v108l28 18-34 22q-8 2-10-6z"/>
		</g>`;
	}
	// upper tube
	s += `<path fill="${p.cap}" d="M204 86q4-16 16-16l662 36q10 4 10 20l-6 74-680-32q-12-40-2-82z"/>`;
	for (let i = 0; i < 5; i++) {
		const w = i === 4 ? 114 : 122;
		s += `<g transform="translate(${130.5 * i} ${8.5 * i})">
			<path fill="${p.tube}" d="M206 82l${w} 8-4 84-${w} -7z"/>
			${streaks(204, 84, w, 78, flat ? 12 : 9, p.streak, flat)}
			<path stroke="${p.edge}" stroke-width="4" d="M${208 + w} 88l-4 86"/>
		</g>`;
	}
	for (const y of [163, 1008]) {
		s += `<path fill="${p.mid}" stroke="${p.dark}" stroke-width="3" d="M872 ${y - 24}h16q26 24 0 50h-16z"/>
			<path fill="none" stroke="${p.panel}" stroke-width="3" d="M880 ${y - 16}v32M888 ${y - 10}l-8 26"/>`;
	}
	return s;
}

function gridLines() {
	let major = '', minor = '';
	for (const y of [275, 541]) major += `M0 ${y}L1556 ${y + 91}`;
	for (const [x, y, x2, y2] of [[0, 437, 960, -40], [0, 38, 115, -15], [307, 675, 1556, 33], [1073, 675, 1556, 430]]) major += `M${x} ${y}L${x2} ${y2}`;
	for (const y of [-80, 20, 142, 200, 248, 303, 330, 356, 382, 408, 470, 568, 594, 618, 642]) minor += `M0 ${y}L1556 ${y + 92}`;
	for (let x = -60; x < 2900; x += 152) minor += `M${x} 675L${x + 1400} -45`;
	return `<path stroke="#2f3235" d="${minor}"/><path stroke="#383c45" d="${major}"/>`;
}

define('cad-viewport', `
	<style>
		:host { display: block; position: relative; flex: 1; min-height: 0; overflow: hidden; box-sizing: border-box; background: #2b2d2f; border: solid #6f6f6f; border-width: 0 2px 1px 2px }
		${reset}
		.scene { position: absolute; inset: 0; width: 100%; height: 100% }
		.wheel { position: absolute; top: 15px; right: 12px }
		.chips { position: relative; display: flex; gap: 4px; padding: 5px 7px; color: #7e8082 }
		.chips button { height: 12px; padding: 0 7px; border-radius: 6px; background: #444647; font-family: "Liberation Sans", sans-serif }
	</style>
	<svg class="scene" viewBox="2 0 1552 674" preserveAspectRatio="xMidYMid slice" role="img" aria-label="Модели радиаторов">
		<defs><linearGradient id="plate"><stop stop-color="#868686"/><stop offset=".5" stop-color="#8e8e8e"/><stop offset=".8" stop-color="#8a8a8a"/><stop offset="1" stop-color="#777"/></linearGradient></defs>
		<g fill="none">${gridLines()}</g>
		<g transform="translate(400 114) scale(.3333)">${radiator(LIGHT)}</g>
		<g transform="translate(749 127) scale(.3333)">${radiator(SHADED)}</g>
	</svg>
	<svg class="wheel" width="141" height="141" viewBox="0 0 141 141" aria-hidden="true">
		<g fill="none" stroke="#77797b"><circle cx="70.500" cy="70.500" r="69.500"/><circle cx="70.500" cy="70.500" r="46"/><path d="M70.500 1v139M1 70.500h139"/></g>
		<circle cx="58" cy="32" r="5" fill="#8f6a4b"/>
	</svg>
	<div class="chips">
		<button>+</button><button>Пользовательский вид</button><button>Реалистичный</button><button>— нет связанных видов —</button>
	</div>
`);

///////////////////    footer    //////////////////////////

define('layout-tabs', `
	<style>
		:host { display: flex; align-items: flex-start; height: 16px; padding-left: 3px; border-bottom: 2px solid #6f6f6f; background: #4b4b4b }
		${reset}
		button { justify-content: center; width: 21px; height: 14px; border-right: 1px solid #7c7c7c; color: #b5b5b5 }
		.list { width: 14px; margin-right: 15px; border: 0 }
		.on { width: auto; padding: 0 4px 0 6px; border: 0; background: #6e6e6e; color: #fff }
	</style>
	<button class="list" aria-label="Список листов"><cad-icon name="sheets"></cad-icon></button>
	<button class="on">Модель</button><button>A4</button><button>A3</button><button>A2</button><button>A1</button>
`);

define('command-line', `
	<style>
		:host { display: flex; padding: 3px 4px 1px }
		label { width: 58px; height: 18px; box-sizing: border-box; padding-left: 6px; line-height: 18px; background: #6b6b6b; color: #fff }
		input { flex: 1; min-width: 0; border: 0; padding: 0 4px; background: none; color: inherit; font: inherit; outline: 0 }
	</style>
	<label for="cmd">Команда:</label><input id="cmd" type="text">
`);

define('status-bar', `
	<style>
		:host { display: flex; align-items: stretch; height: 18px; padding-left: 2px; color: #f0f0f0 }
		${reset}
		.coords { width: 105px; line-height: 17px }
		button { box-sizing: border-box; justify-content: center; height: 16px; margin-top: 1px; padding: 0 6px; border-right: 1px solid #646464 }
		[aria-pressed=true] { background: var(--on); border: 1px solid var(--on-line); border-left-width: 0 }
		.first { border-left-width: 1px }
		.gap { margin-left: 3px }
		.right { display: flex; margin-left: auto; align-items: flex-start }
		.right button { width: 24px; padding: 0 }
		.right .text { width: auto }
		.right .bare { border-right: 0; width: 18px }
		.right .scale { width: 74px; border-right: 0 }
		.space { width: 72px }
	</style>
	<span class="coords">60.5804,-171.2080,0.000</span>
	<button>ШАГ</button>
	<button class="first" aria-pressed="true">СЕТКА</button>
	<button aria-pressed="true">оПРИВЯЗКА</button>
	<button aria-pressed="true">3D оПРИВЯЗКА</button>
	<button aria-pressed="true">ОТС-ОБЪЕКТ</button>
	<button>ОТС-ПОЛЯР</button><button>ОРТО</button><button>ДИН-ВВОД</button><button>ИЗО</button>
	<button class="first gap" aria-pressed="true">ВЕС</button>
	<button aria-pressed="true">ШТРИХОВКА</button>
	<div class="right">
		<button class="text">МОДЕЛЬ</button>
		<button class="bare" aria-label="Связь"><cad-icon name="link"></cad-icon></button>
		<button class="bare" aria-label="Заметки"><cad-icon name="note"></cad-icon></button>
		<span class="space"></span>
		<button class="bare" aria-label="Выбор"><cad-icon name="pick"></cad-icon></button>
		<button class="bare" aria-label="Изоляция"><cad-icon name="bulb"></cad-icon></button>
		<button class="first" aria-pressed="true" aria-label="Предвыбор"><cad-icon name="sel"></cad-icon></button>
		<button aria-pressed="true" aria-label="Блокировка"><cad-icon name="lock"></cad-icon></button>
		<button aria-pressed="true" aria-label="Динамическая ПСК"><cad-icon name="coords"></cad-icon></button>
		<button class="scale">m1:100</button>
		<button aria-label="Панорама"><cad-icon name="hand"></cad-icon></button>
		<button aria-label="Масштаб"><cad-icon name="lens"></cad-icon></button>
		<button aria-label="Показать все"><cad-icon name="lenswin"></cad-icon></button>
		<button aria-label="Рамка"><cad-icon name="lensbox"></cad-icon></button>
		<button aria-label="Орбита"><cad-icon name="spin"></cad-icon></button>
		<button class="bare" aria-label="Регенерация"><cad-icon name="regen"></cad-icon></button>
		<button aria-label="Закрепить окна"><cad-icon name="winlock"></cad-icon></button>
		<button class="bare" aria-label="Полный экран"><cad-icon name="full"></cad-icon></button>
	</div>
`);

define('cad-app', `
	<style>:host { display: flex; flex-direction: column; height: 100vh; overflow: hidden }</style>
	<cad-header></cad-header>
	<cad-ribbon></cad-ribbon>
	<doc-tabs></doc-tabs>
	<cad-viewport></cad-viewport>
	<layout-tabs></layout-tabs>
	<command-line></command-line>
	<status-bar></status-bar>
`);
</script>
</body>
</html>
